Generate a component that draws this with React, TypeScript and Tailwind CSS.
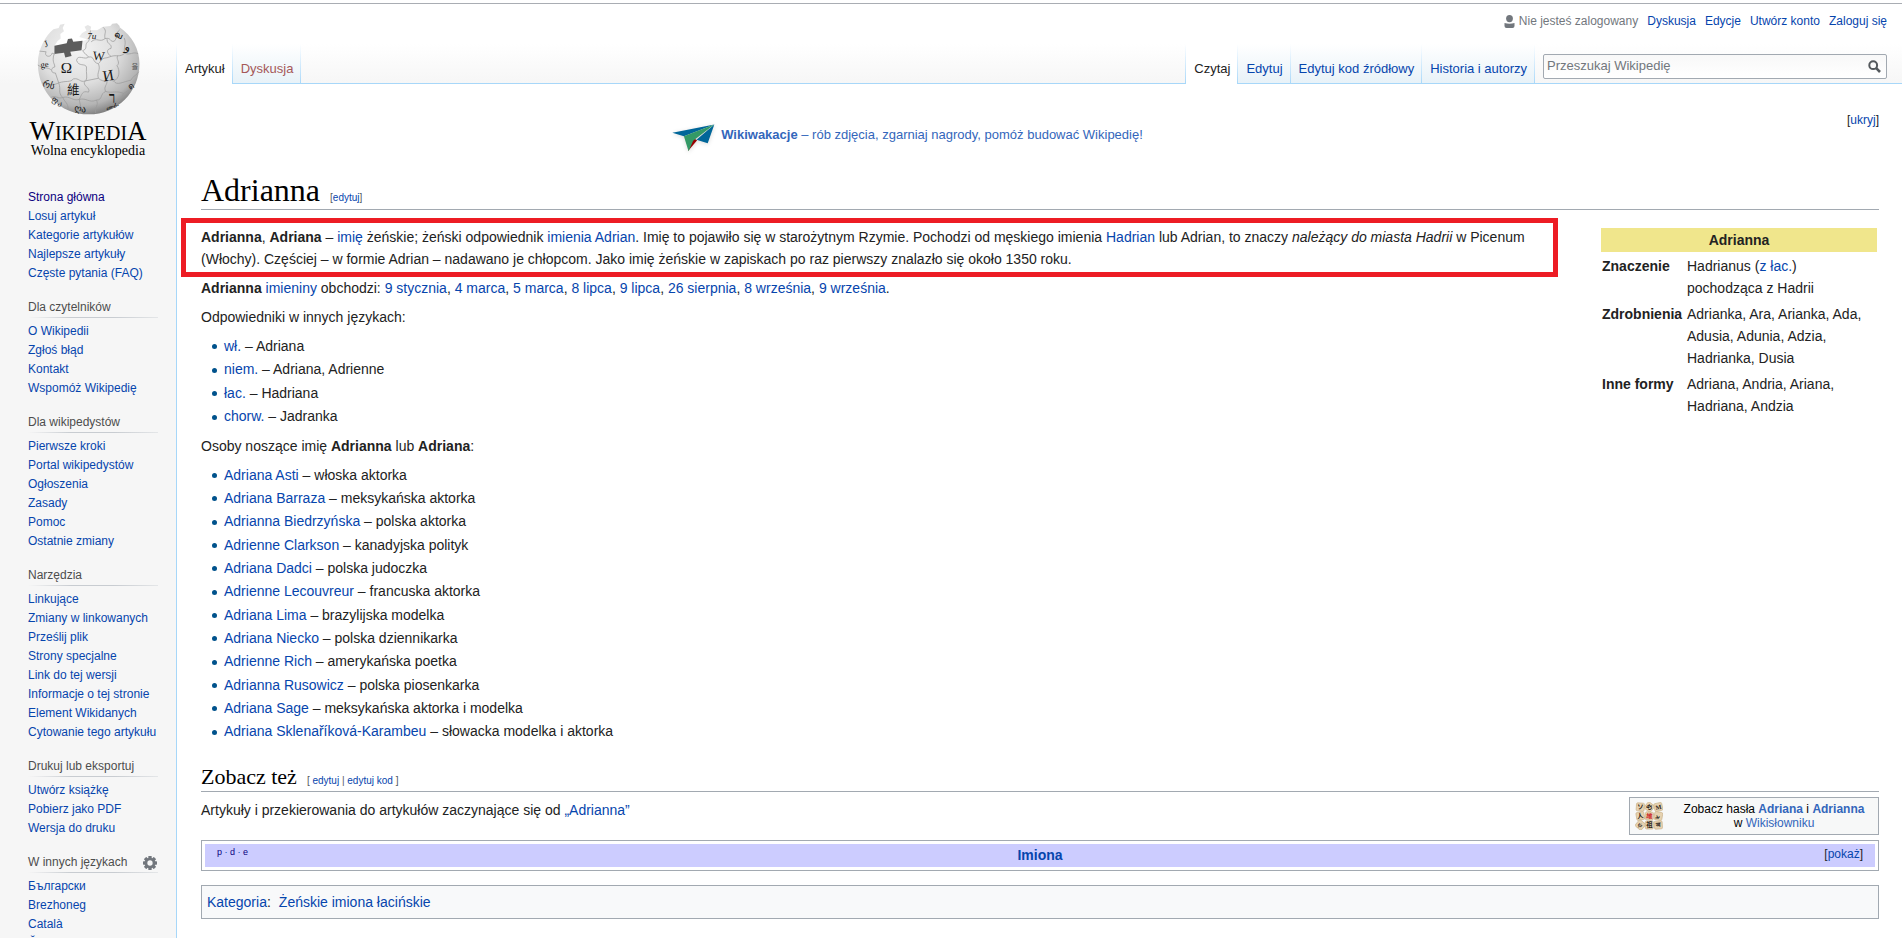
import { Fragment, type ReactNode } from "react";

function A({ children, className = "text-[#0645ad]" }: { children: ReactNode; className?: string }) {
  return (
    <a href="#" className={`${className} hover:underline`}>
      {children}
    </a>
  );
}

function Globe() {
  return (
    <svg viewBox="48 34 316 284" width="105" height="94" aria-hidden="true">
      <defs>
        <radialGradient id="ball" cx="0.4" cy="0.28" r="0.78">
          <stop offset="0" stopColor="#f4f4f4" />
          <stop offset="0.5" stopColor="#dedede" />
          <stop offset="0.8" stopColor="#b4b4b4" />
          <stop offset="1" stopColor="#6c6c6c" />
        </radialGradient>
      </defs>
      <path
        d="M120 42 L134 39 L128 52 L132 62 L121 70 L122 84 L112 92 L102 108 L104 131 L132 127 L138 140 L152 138 L150 124 L186 119 L188 92 L202 86 L178 79 L186 68 L200 60 L194 48 L204 43 L214 48 L212 58 L232 59 L250 48 L272 46 L278 39 L292 38 L300 46 L300 50 C338 76 360 116 360 160 C360 246 292 313 207 313 C120 313 53 246 53 160 C53 116 76 76 100 56 L116 52 Z"
        fill="url(#ball)"
      />
      <path
        d="M103 106 L140 98 L144 85 L156 84 L160 94 L188 91 L185 119 L151 124 L155 137 L136 141 L132 127 L103 131 Z"
        fill="#5d5d5d"
      />
      <g fill="none" stroke="#9a9a9a" strokeWidth="2.2">
        <path d="M58 122 L78 124 C70 138 92 144 96 128 L104 131" />
        <path d="M102 131 C94 156 106 162 104 170 C90 172 92 190 106 188 L116 218" />
        <path d="M53 164 C70 176 84 170 92 178" />
        <path d="M116 218 C140 210 150 218 160 206 C178 202 180 218 196 212 L236 204" />
        <path d="M188 120 C194 132 200 130 206 140 C196 150 172 130 170 150 C176 170 196 158 200 170 C198 190 204 200 198 212" />
        <path d="M206 140 C226 136 216 156 236 160 C246 152 240 144 262 142 L274 138" />
        <path d="M212 60 C208 78 212 88 202 96 C194 104 204 114 190 120" />
        <path d="M214 94 C230 78 240 98 256 84 C252 68 264 62 250 50" />
        <path d="M256 84 C276 80 270 96 284 92 C296 78 288 66 300 58" />
        <path d="M262 86 C262 104 278 98 274 114 C258 116 262 130 274 138" />
        <path d="M274 138 C292 132 300 142 316 128 C310 110 322 104 314 82" />
        <path d="M316 128 C330 136 342 122 356 130" />
        <path d="M236 204 C230 186 244 180 236 160" />
        <path d="M236 204 C254 220 262 206 282 212 C300 206 302 180 292 166 C304 156 288 146 294 136" />
        <path d="M282 212 C292 228 310 214 334 210 C340 196 352 196 358 184" />
        <path d="M66 218 C84 220 90 230 116 218 C124 240 112 246 128 262" />
        <path d="M92 262 C108 254 114 268 128 262 C150 256 158 274 178 268" />
        <path d="M196 212 C184 226 214 232 206 246 C186 240 186 254 178 268 L186 308" />
        <path d="M178 268 C200 262 208 280 230 270 C250 270 240 250 258 244 C250 230 264 224 262 210" />
        <path d="M230 270 C238 284 224 292 228 310" />
        <path d="M258 244 C276 250 292 240 312 250 C306 264 296 272 286 290" />
        <path d="M312 250 L340 232" />
        <path d="M128 262 C134 276 146 280 144 298" />
      </g>
      <g fill="#161616" fontFamily="'Liberation Serif','Noto Sans CJK SC',serif">
        <text x="122" y="187" fontSize="46">Ω</text>
        <text x="218" y="148" fontSize="38" transform="rotate(5 218 148)">W</text>
        <text x="252" y="214" fontSize="46" transform="rotate(-10 252 214)">И</text>
        <text x="141" y="252" fontSize="38">維</text>
        <text x="268" y="272" fontSize="38" fontWeight="bold">ך</text>
        <text x="202" y="84" fontSize="28" fontStyle="italic">7u</text>
        <text x="314" y="118" fontSize="36" transform="rotate(14 314 118)">و</text>
        <text x="282" y="76" fontSize="26" transform="rotate(24 282 76)" fontWeight="bold">வ</text>
        <text x="76" y="110" fontSize="28" transform="rotate(-22 76 110)">J</text>
        <text x="62" y="172" fontSize="26" transform="rotate(-6 62 172)">ge</text>
        <text x="66" y="226" fontSize="28" transform="rotate(20 66 226)">რს</text>
        <text x="336" y="176" fontSize="22" fill="#555">율</text>
        <text x="330" y="240" fontSize="26" transform="rotate(-30 330 240)">ด</text>
        <text x="162" y="302" fontSize="28" transform="rotate(8 162 302)">ღა</text>
        <text x="94" y="270" fontSize="24" transform="rotate(40 94 270)">ფა</text>
        <text x="262" y="304" fontSize="22" transform="rotate(-22 262 304)">ሙፈ</text>
      </g>
    </svg>
  );
}

function Plane() {
  return (
    <svg viewBox="0 0 130 84" width="43" height="28" aria-hidden="true" className="drop-shadow-sm">
      <path d="M48 82 L76 49 L64 42 Z" fill="#990000" />
      <path d="M1 26 L128 1 L108 58 L74 47 L128 1 L36 37 Z" fill="#006699" />
      <path d="M36 37 L128 1 L64 50 L50 82 Z" fill="#339966" />
    </svg>
  );
}

function Tiles() {
  const marks = ["ソ", "め", "M", "人", "維", "ىد", "ψ", "祖", "ञ"];
  return (
    <svg viewBox="0 0 84 84" width="28" height="28" aria-hidden="true">
      {marks.map((m, i) => {
        const x = 4 + (i % 3) * 27;
        const y = 3 + Math.floor(i / 3) * 27;
        return (
          <g key={m} transform={`rotate(${[4, 38, -12, -10, 6, 10, 40, 0, -4][i]} ${x + 12} ${y + 12})`}>
            <rect x={x} y={y} width="24" height="24" rx="4" fill="#e6d2b0" stroke="#c9b28a" strokeWidth="2" />
            <text
              x={x + 12}
              y={y + 19}
              textAnchor="middle"
              fontSize="19"
              fontWeight="bold"
              fontFamily="'Liberation Serif','Noto Sans CJK SC',serif"
              fill={i === 4 ? "#cc1f1f" : "#2b2418"}
            >
              {m}
            </text>
          </g>
        );
      })}
    </svg>
  );
}

function Gear() {
  return (
    <svg viewBox="0 0 20 20" width="14" height="14" aria-hidden="true">
      <g fill="#72777d">
        {[0, 45, 90, 135].map((r) => (
          <rect key={r} x="7.6" y="0" width="4.8" height="20" rx="0.8" transform={`rotate(${r} 10 10)`} />
        ))}
        <circle cx="10" cy="10" r="7.6" />
      </g>
      <circle cx="10" cy="10" r="3.8" fill="#f6f6f6" />
    </svg>
  );
}

const portals: { title?: string; gear?: boolean; items: string[] }[] = [
  { items: ["Strona główna", "Losuj artykuł", "Kategorie artykułów", "Najlepsze artykuły", "Częste pytania (FAQ)"] },
  { title: "Dla czytelników", items: ["O Wikipedii", "Zgłoś błąd", "Kontakt", "Wspomóż Wikipedię"] },
  {
    title: "Dla wikipedystów",
    items: ["Pierwsze kroki", "Portal wikipedystów", "Ogłoszenia", "Zasady", "Pomoc", "Ostatnie zmiany"],
  },
  {
    title: "Narzędzia",
    items: [
      "Linkujące",
      "Zmiany w linkowanych",
      "Prześlij plik",
      "Strony specjalne",
      "Link do tej wersji",
      "Informacje o tej stronie",
      "Element Wikidanych",
      "Cytowanie tego artykułu",
    ],
  },
  { title: "Drukuj lub eksportuj", items: ["Utwórz książkę", "Pobierz jako PDF", "Wersja do druku"] },
  { title: "W innych językach", gear: true, items: ["Български", "Brezhoneg", "Català", "Čeština"] },
];

function Sidebar() {
  return (
    <aside className="w-44 shrink-0 text-xs">
      <a href="#" className="mt-[18px] flex flex-col items-center font-['Liberation_Serif',serif] text-black">
        <Globe />
        <span className="mt-[5px] block text-[20px] leading-5 whitespace-nowrap">
          <span className="text-[27px]">W</span>IKIPEDI<span className="text-[27px]">A</span>
        </span>
        <span className="block text-sm leading-[15px] whitespace-nowrap">Wolna encyklopedia</span>
      </a>
      <div className="mt-[30px] flex flex-col gap-[15px] pr-[18px] pl-7">
        {portals.map((p, i) => (
          <nav key={i}>
            {p.title && (
              <>
                <h3 className="flex items-center justify-between leading-[19px] text-[#4d4d4d]">
                  {p.title}
                  {p.gear && (
                    <button type="button" aria-label="Ustawienia języka" className="mr-px">
                      <Gear />
                    </button>
                  )}
                </h3>
                <div className="mb-1 h-px bg-[linear-gradient(to_right,#f6f6f6,#c8ccd1_33%,#c8ccd1_66%,#e4e6e8)]" />
              </>
            )}
            <ul>
              {p.items.map((t) => (
                <li key={t} className="leading-[19px] whitespace-nowrap">
                  <A className={t === "Strona główna" ? "text-[#0b0080]" : "text-[#0645ad]"}>{t}</A>
                </li>
              ))}
            </ul>
          </nav>
        ))}
      </div>
    </aside>
  );
}

function Tab({ label, active, red }: { label: string; active?: boolean; red?: boolean }) {
  return (
    <li className="flex">
      <a
        href="#"
        className={`h-10 pt-4 pr-[7px] pl-2 text-[13px] leading-[18px] whitespace-nowrap ${
          active
            ? "bg-white text-[#222]"
            : red
              ? "border-b border-[#a7d7f9] bg-linear-to-b from-white to-[#e8f2f8] text-[#a55858]"
              : "border-b border-[#a7d7f9] bg-linear-to-b from-white to-[#e8f2f8] text-[#0645ad]"
        }`}
      >
        {label}
      </a>
      <span className="w-px bg-linear-to-b from-white to-[#a7d7f9]" />
    </li>
  );
}

function Header() {
  return (
    <header>
      <ul className="flex h-10 items-start justify-end gap-[9px] pt-[8px] pr-[15px] text-xs leading-[19px]">
        <li className="flex items-center gap-1 text-[#54595d]">
          <svg viewBox="0 0 11 13" width="11" height="13" aria-hidden="true">
            <ellipse cx="5.5" cy="3.6" rx="3.4" ry="3.6" fill="#72777d" />
            <path d="M0.5 8 Q5.5 9.6 10.5 8 V11 Q10.5 13 8.5 13 H2.5 Q0.5 13 0.5 11 Z" fill="#72777d" />
          </svg>
          <span className="text-[#72777d]">Nie jesteś zalogowany</span>
        </li>
        {["Dyskusja", "Edycje", "Utwórz konto", "Zaloguj się"].map((t) => (
          <li key={t}>
            <A>{t}</A>
          </li>
        ))}
      </ul>
      <div className="flex h-10">
        <ul className="flex">
          <li className="w-px bg-linear-to-b from-white to-[#a7d7f9]" />
          <Tab label="Artykuł" active />
          <Tab label="Dyskusja" red />
        </ul>
        <div className="flex-1 border-b border-[#a7d7f9]" />
        <ul className="flex">
          <li className="w-px bg-linear-to-b from-white to-[#a7d7f9]" />
          <Tab label="Czytaj" active />
          <Tab label="Edytuj" />
          <Tab label="Edytuj kod źródłowy" />
          <Tab label="Historia i autorzy" />
        </ul>
        <form className="border-b border-[#a7d7f9] pt-[10px] pr-[15px] pl-2" onSubmit={(e) => e.preventDefault()}>
          <div className="flex h-[25px] w-[344px] items-center rounded-xs border border-[#a2a9b1] bg-linear-to-b from-[#f8f8f8] to-white pr-[5px] pl-[3px]">
            <input
              type="search"
              aria-label="Przeszukaj Wikipedię"
              placeholder="Przeszukaj Wikipedię"
              className="min-w-0 flex-1 bg-transparent pb-0.5 text-[13px] leading-[18px] outline-none placeholder:text-[#72777d]"
            />
            <button type="submit" aria-label="Szukaj">
              <svg viewBox="0 0 13 13" width="13" height="13" fill="none" stroke="#54595d" aria-hidden="true">
                <circle cx="5.2" cy="5.2" r="3.9" strokeWidth="2" />
                <path d="M8.2 8.2 L12 12" strokeWidth="2.6" />
              </svg>
            </button>
          </div>
        </form>
      </div>
    </header>
  );
}

function Bullets({ items, className }: { items: [string, string][]; className: string }) {
  return (
    <ul className={`mt-[6px] grid auto-rows-fr pl-[11px] ${className}`}>
      {items.map(([name, note]) => (
        <li key={name} className="flex items-center">
          <span className="mt-0.5 mr-[7px] size-[5px] rounded-full bg-[#00528c]" />
          <span>
            <A>{name}</A> – {note}
          </span>
        </li>
      ))}
    </ul>
  );
}

const languages: [string, string][] = [
  ["wł.", "Adriana"],
  ["niem.", "Adriana, Adrienne"],
  ["łac.", "Hadriana"],
  ["chorw.", "Jadranka"],
];

const people: [string, string][] = [
  ["Adriana Asti", "włoska aktorka"],
  ["Adriana Barraza", "meksykańska aktorka"],
  ["Adrianna Biedrzyńska", "polska aktorka"],
  ["Adrienne Clarkson", "kanadyjska polityk"],
  ["Adriana Dadci", "polska judoczka"],
  ["Adrienne Lecouvreur", "francuska aktorka"],
  ["Adriana Lima", "brazylijska modelka"],
  ["Adriana Niecko", "polska dziennikarka"],
  ["Adrienne Rich", "amerykańska poetka"],
  ["Adrianna Rusowicz", "polska piosenkarka"],
  ["Adriana Sage", "meksykańska aktorka i modelka"],
  ["Adriana Sklenaříková-Karambeu", "słowacka modelka i aktorka"],
];

const nameDays = [
  "9 stycznia",
  "4 marca",
  "5 marca",
  "8 lipca",
  "9 lipca",
  "26 sierpnia",
  "8 września",
  "9 września",
];

function Infobox() {
  return (
    <table className="mt-4 w-[280px] shrink-0 border-separate border-spacing-0.5 self-start text-left">
      <thead>
        <tr>
          <th colSpan={2} className="bg-[#f0e68c] p-px text-center">
            Adrianna
          </th>
        </tr>
      </thead>
      <tbody className="align-top">
        <tr>
          <th className="w-[83px] p-px">Znaczenie</th>
          <td className="p-px">
            Hadrianus (<A>z łac.</A>)
            <br />
            pochodząca z Hadrii
          </td>
        </tr>
        <tr>
          <th className="p-px">Zdrobnienia</th>
          <td className="p-px">Adrianka, Ara, Arianka, Ada, Adusia, Adunia, Adzia, Hadrianka, Dusia</td>
        </tr>
        <tr>
          <th className="p-px">Inne formy</th>
          <td className="p-px">
            Adriana, Andria, Ariana,
            <br />
            Hadriana, Andzia
          </td>
        </tr>
      </tbody>
    </table>
  );
}

function Article() {
  return (
    <main className="flex-1 border-l border-[#a7d7f9] bg-white pr-[23px] pl-6 text-sm leading-[22px] text-[#222]">
      <div className="flex h-[88px] items-start pt-[26px]">
        <div className="flex flex-1 items-start justify-center gap-[6px] pt-[14px] pr-[233px]">
          <Plane />
          <p className="text-[13px]">
            <A className="text-[#3366bb]">
              <b>Wikiwakacje</b> – rób zdjęcia, zgarniaj nagrody, pomóż budować Wikipedię!
            </A>
          </p>
        </div>
        <p className="text-xs leading-[21px]">
          [<button type="button" className="text-[#0645ad]">ukryj</button>]
        </p>
      </div>
      <h1 className="border-b border-[#a2a9b1] font-['Liberation_Serif',serif] text-[32px] leading-[37px] text-black">
        Adrianna
        <span className="ml-[10px] font-['Liberation_Sans',sans-serif] text-[10px] leading-none text-[#54595d]">
          [<A>edytuj</A>]
        </span>
      </h1>
      <div className="flex">
        <div className="flex-1">
          <p className="mt-2 -ml-5 border-5 border-[#ed1c24] px-[15px] pt-[3px] pb-0.5">
            <b>Adrianna</b>, <b>Adriana</b> – <A>imię</A> żeńskie; żeński odpowiednik <A>imienia</A> <A>Adrian</A>. Imię to
            pojawiło się w starożytnym Rzymie. Pochodzi od męskiego imienia <A>Hadrian</A> lub Adrian, to znaczy{" "}
            <i>należący do miasta Hadrii</i> w Picenum (Włochy). Częściej – w formie Adrian – nadawano je chłopcom. Jako
            imię żeńskie w zapiskach po raz pierwszy znalazło się około 1350 roku.
          </p>
          <p>
            <b>Adrianna</b> <A>imieniny</A> obchodzi:{" "}
            {nameDays.map((d, i) => (
              <Fragment key={d}>
                {i > 0 && ", "}
                <A>{d}</A>
              </Fragment>
            ))}
            .
          </p>
          <p className="mt-[7px]">Odpowiedniki w innych językach:</p>
          <Bullets items={languages} className="min-h-[94px]" />
          <p className="mt-[7px]">
            Osoby noszące imię <b>Adrianna</b> lub <b>Adriana</b>:
          </p>
          <Bullets items={people} className="min-h-[280px]" />
        </div>
        <div className="w-[41px] shrink-0" />
        <Infobox />
      </div>
      <h2 className="mt-5 border-b border-[#a2a9b1] font-['Liberation_Serif',serif] text-[22px] leading-[28px] text-black">
        Zobacz też
        <span className="ml-[10px] font-['Liberation_Sans',sans-serif] text-[10px] leading-none text-[#54595d]">
          [ <A>edytuj</A> | <A>edytuj kod</A> ]
        </span>
      </h2>
      <div className="mt-[5px] flex items-start justify-between">
        <p className="mt-[2px]">
          Artykuły i przekierowania do artykułów zaczynające się od <A>„Adrianna”</A>
        </p>
        <div className="flex h-[38px] w-[250px] items-start border border-[#a2a9b1] bg-[#f7f8f8] pt-[4px] pl-[5px] text-xs leading-[14px] text-black">
          <Tiles />
          <p className="flex-1 pr-px pl-2 text-center">
            Zobacz hasła{" "}
            <A className="text-[#3366bb]">
              <b>Adriana</b>
            </A>{" "}
            i{" "}
            <A className="text-[#3366bb]">
              <b>Adrianna</b>
            </A>
            <br />w <A className="text-[#3366bb]">Wikisłowniku</A>
          </p>
        </div>
      </div>
      <nav className="mt-[5px] border border-[#a2a9b1] p-[3px]">
        <div className="flex h-[23px] justify-between bg-[#ccccff] px-3">
          <p className="w-20 text-[9px] leading-[17px] whitespace-pre text-[#0645ad]">
            <A className="text-[#0b0080]">p</A> · <A className="text-[#0b0080]">d</A> ·{" "}
            <A className="text-[#0b0080]">e</A>
          </p>
          <A className="font-bold text-[#0645ad]">Imiona</A>
          <p className="w-20 text-right text-xs leading-[20px]">
            [<button type="button" className="text-[#0645ad]">pokaż</button>]
          </p>
        </div>
      </nav>
      <p className="mt-[14px] border border-[#a2a9b1] bg-[#f8f9fa] px-[5px] py-[5px]">
        <A>Kategoria</A>:<span className="ml-2"><A>Żeńskie imiona łacińskie</A></span>
      </p>
    </main>
  );
}

export default function App() {
  return (
    <div className="flex h-screen flex-col overflow-hidden bg-white pt-[3px] font-['Liberation_Sans',Arial,sans-serif]">
      <div className="flex min-h-0 flex-1 border-t border-[#a9adb3] bg-[linear-gradient(#fff_40px,#f6f6f6_80px)]">
        <Sidebar />
        <div className="flex min-w-0 flex-1 flex-col">
          <Header />
          <Article />
        </div>
      </div>
    </div>
  );
}
